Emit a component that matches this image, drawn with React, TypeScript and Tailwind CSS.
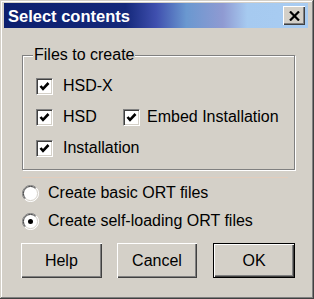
import React from "react";

function CheckBox({ checked }: { checked: boolean }) {
  return (
    <div className="w-[17px] h-[17px] shrink-0 bg-white border border-t-[#808080] border-l-[#808080] border-b-white border-r-white shadow-[inset_1px_1px_0_#404040,inset_-1px_-1px_0_#d4d0c8]">
      {checked && (
        <svg width="15" height="15" viewBox="0 0 15 15">
          <polyline points="3.5,7 6,9.8 11.5,4" fill="none" stroke="#000" strokeWidth="2.6" />
        </svg>
      )}
    </div>
  );
}

function Radio({ checked }: { checked: boolean }) {
  return (
    <svg width="17" height="17" viewBox="0 0 17 17" className="shrink-0">
      <circle cx="8.5" cy="8.5" r="8" fill="#fff" />
      <path d="M14.2 2.8 A8 8 0 0 0 2.8 14.2" fill="none" stroke="#808080" strokeWidth="1" />
      <path d="M2.8 14.2 A8 8 0 0 0 14.2 2.8" fill="none" stroke="#ffffff" strokeWidth="1" />
      <path d="M13.5 3.5 A7 7 0 0 0 3.5 13.5" fill="none" stroke="#404040" strokeWidth="1" />
      <path d="M3.5 13.5 A7 7 0 0 0 13.5 3.5" fill="none" stroke="#d4d0c8" strokeWidth="1" />
      {checked && <circle cx="8.5" cy="8.5" r="2.5" fill="#000" />}
    </svg>
  );
}

function Btn({ label, primary, className }: { label: string; primary?: boolean; className?: string }) {
  return (
    <button
      className={
        "h-[35px] flex items-center justify-center bg-[#d4d0c8] text-black " +
        (primary
          ? "border border-black shadow-[inset_1px_1px_0_#fff,inset_-1px_-1px_0_#404040,inset_-2px_-2px_0_#808080]"
          : "shadow-[inset_1px_1px_0_#fff,inset_-1px_-1px_0_#404040,inset_-2px_-2px_0_#808080]") +
        " " +
        (className ?? "")
      }
    >
      {label}
    </button>
  );
}

export default function App() {
  return (
    <div
      className="w-[314px] h-[299px] bg-[#d4d0c8] flex flex-col text-[16px] leading-[18px] text-black shadow-[inset_-1px_-1px_0_#404040,inset_1px_1px_0_#d4d0c8,inset_-2px_-2px_0_#808080,inset_2px_2px_0_#ffffff]"
      style={{ fontFamily: '"Liberation Sans", Arial, sans-serif' }}
    >
      {/* title bar */}
      <div className="mt-[3px] ml-[4px] mr-[6px] h-[25px] flex items-center justify-between bg-[linear-gradient(90deg,#0c1f6e_0%,#14287a_40%,#3f4fae_50%,#6a98d0_60%,#8f9ad2_72%,#a6caf0_80%,#a8ccf2_100%)]">
        <span className="pl-[4px] font-bold text-white text-[16.5px]">Select contents</span>
        <div className="mr-[3px] w-[22px] h-[19px] flex items-center justify-center bg-[#d4d0c8] shadow-[inset_1px_1px_0_#fff,inset_-1px_-1px_0_#404040,inset_-2px_-2px_0_#808080]">
          <svg width="11" height="10" viewBox="0 0 11 10">
            <path d="M1 0.5 L10 9.5 M10 0.5 L1 9.5" stroke="#000" strokeWidth="2.2" />
          </svg>
        </div>
      </div>

      <div className="pl-[22px] pr-[19px] flex flex-col">
        <fieldset className="mt-[18px] border border-[#808080] shadow-[inset_1px_1px_0_#fff,1px_1px_0_#fff] pl-[10px] pt-[13px] pb-[12px]">
          <legend className="px-[1px] bg-[#d4d0c8]">Files to create</legend>
          <div className="flex flex-col gap-[14px] ml-[3px]">
            <div className="flex items-center gap-[10px]">
              <CheckBox checked />
              <span>HSD-X</span>
            </div>
            <div className="flex items-center -mt-[1px]">
              <CheckBox checked />
              <span className="ml-[10px] w-[60px]">HSD</span>
              <CheckBox checked />
              <span className="ml-[7px]">Embed Installation</span>
            </div>
            <div className="flex items-center gap-[10px] -mt-[1px]">
              <CheckBox checked />
              <span>Installation</span>
            </div>
          </div>
        </fieldset>

        <div className="mt-[7px] h-px w-[266px] bg-[#e2cdbd]" />

        <div className="mt-[6px] flex items-center gap-[9px]">
          <Radio checked={false} />
          <span>Create basic ORT files</span>
        </div>
        <div className="mt-[10px] flex items-center gap-[9px]">
          <Radio checked />
          <span>Create self-loading ORT files</span>
        </div>

        <div className="mt-[13px] flex -ml-[1px]">
          <Btn label="Help" className="w-[81px]" />
          <Btn label="Cancel" className="ml-[15px] w-[81px]" />
          <Btn label="OK" primary className="ml-[16px] w-[82px]" />
        </div>
      </div>
    </div>
  );
}
